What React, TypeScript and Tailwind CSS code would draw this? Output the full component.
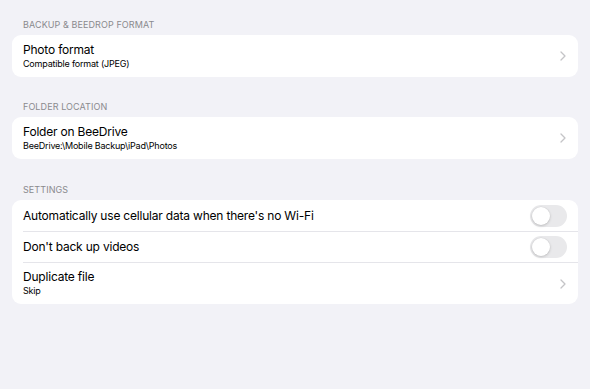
import React from "react";

function Chevron() {
  return (
    <svg width="6" height="10" viewBox="0 0 6 10" fill="none" className="shrink-0">
      <path d="M1 1l4 4-4 4" stroke="#c4c4c7" strokeWidth="1.3" strokeLinecap="round" strokeLinejoin="round" />
    </svg>
  );
}

function Toggle() {
  return (
    <div className="w-[37px] h-[22px] rounded-full bg-[#e9e9eb] p-[2px] flex items-center shrink-0">
      <div className="w-[18px] h-[18px] rounded-full bg-white shadow-[0_1px_3px_rgba(0,0,0,0.18),0_0_0_0.5px_rgba(0,0,0,0.04)]" />
    </div>
  );
}

function Header({ children }: { children: React.ReactNode }) {
  return (
    <div className="px-[11px] h-[24px] flex items-end pb-[5px] text-[9px] leading-[11px] tracking-[0.01em] uppercase text-[#8a8a8e]">
      {children}
    </div>
  );
}

function NavRow({ title, sub, border }: { title: string; sub: string; border?: boolean }) {
  return (
    <div className="pl-[11px] h-[42px] flex items-center">
      <div className={`flex-1 h-full flex items-center pr-[12px] ${border ? "border-t border-[#e5e5ea]" : ""}`}>
        <div className="flex-1 flex flex-col -mt-[1px]">
          <div className="text-[12px] leading-[16px] tracking-[-0.2px] text-black">{title}</div>
          <div className="text-[9px] leading-[12px] tracking-[-0.2px] text-black">{sub}</div>
        </div>
        <Chevron />
      </div>
    </div>
  );
}

function ToggleRow({ title, border }: { title: string; border?: boolean }) {
  return (
    <div className="pl-[11px] h-[31px] flex items-center">
      <div className={`flex-1 h-full flex items-center pr-[11px] ${border ? "border-t border-[#e5e5ea]" : ""}`}>
        <div className="flex-1 text-[12px] leading-[16px] tracking-[-0.2px] text-black">{title}</div>
        <Toggle />
      </div>
    </div>
  );
}

export default function App() {
  return (
    <div
      className="w-[590px] h-[389px] bg-[#f2f2f7] px-[12px] pt-[11px]"
      style={{ fontFamily: "Inter, 'Noto Sans', sans-serif" }}
    >
      <Header>Backup &amp; BeeDrop format</Header>
      <div className="bg-white rounded-[9px] overflow-hidden">
        <NavRow title="Photo format" sub="Compatible format (JPEG)" />
      </div>
      <div className="h-[16px]" />
      <Header>Folder location</Header>
      <div className="bg-white rounded-[9px] overflow-hidden">
        <NavRow title="Folder on BeeDrive" sub="BeeDrive:\Mobile Backup\iPad\Photos" />
      </div>
      <div className="h-[17px]" />
      <Header>Settings</Header>
      <div className="bg-white rounded-[9px] overflow-hidden">
        <ToggleRow title="Automatically use cellular data when there's no Wi-Fi" />
        <ToggleRow title="Don't back up videos" border />
        <NavRow title="Duplicate file" sub="Skip" border />
      </div>
    </div>
  );
}
